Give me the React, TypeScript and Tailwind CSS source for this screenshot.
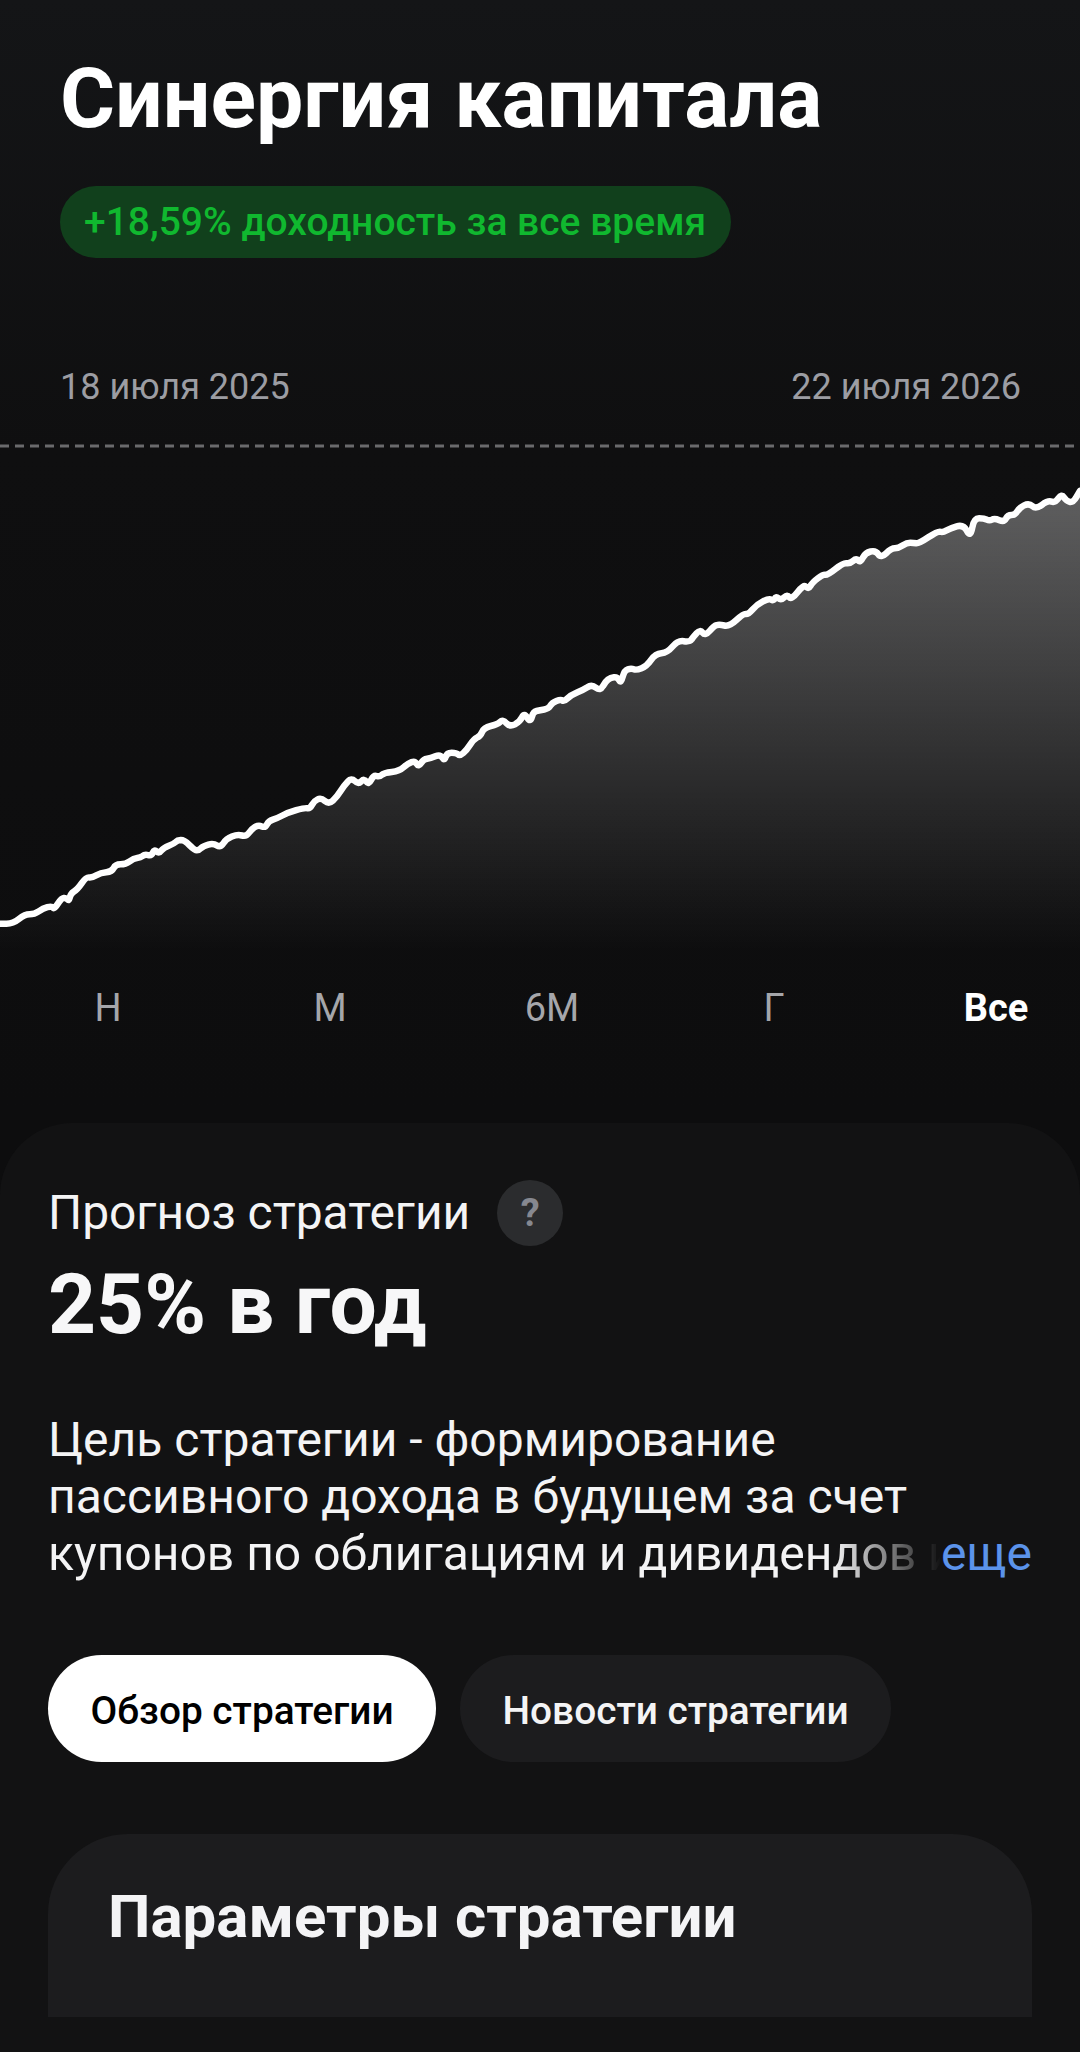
import React from 'react';

// Chart trace, measured off the screenshot: x in 0..3136 (left half + right half), y in 0..1560
const LEFT_TRACE = [
  [0, 1448], [38, 1448], [72, 1420], [100, 1420], [125, 1402], [150, 1395], [158, 1405], [178, 1372], [192, 1370], [200, 1380],
  [205, 1358], [225, 1345], [250, 1308], [268, 1310], [292, 1295], [325, 1292], [335, 1270], [365, 1270], [388, 1252], [408, 1250],
  [420, 1240], [440, 1245], [448, 1225], [462, 1238], [475, 1220], [505, 1208], [515, 1198], [535, 1197], [565, 1228], [578, 1228],
  [590, 1215], [620, 1207], [640, 1220], [657, 1193], [690, 1180], [715, 1187], [730, 1165], [750, 1152], [770, 1160], [780, 1140],
  [805, 1132], [835, 1115], [885, 1100], [900, 1103], [912, 1080], [932, 1070], [955, 1090], [978, 1068], [1000, 1032], [1020, 1010],
  [1040, 1030], [1058, 1012], [1070, 1032], [1085, 1002], [1102, 1008], [1115, 995], [1160, 990], [1185, 967], [1205, 960], [1215, 978],
  [1230, 955], [1250, 952], [1278, 940], [1290, 960], [1298, 935], [1325, 935], [1335, 945], [1355, 928], [1375, 895], [1395, 885],
  [1405, 860], [1445, 850], [1460, 835], [1480, 858], [1510, 842], [1522, 815], [1540, 845], [1548, 812],
];

const RIGHT_TRACE = [
  [0, 808], [25, 803], [35, 785], [60, 775], [70, 782], [90, 762], [125, 747], [150, 730], [175, 750], [190, 722],
  [205, 710], [225, 708], [235, 728], [245, 688], [265, 682], [280, 688], [310, 675], [335, 638], [370, 635], [400, 598],
  [435, 603], [445, 588], [465, 565], [480, 585], [505, 555], [520, 550], [550, 557], [590, 518], [605, 520], [630, 490],
  [665, 472], [678, 480], [685, 465], [700, 478], [718, 460], [730, 477], [765, 430], [780, 445], [790, 425], [822, 400],
  [835, 403], [880, 365], [900, 368], [918, 352], [930, 365], [945, 335], [975, 328], [990, 352], [1020, 322], [1040, 322],
  [1065, 305], [1085, 305], [1100, 308], [1155, 270], [1170, 275], [1190, 262], [1230, 250], [1250, 290], [1260, 232], [1290, 232],
  [1305, 240], [1320, 232], [1348, 243], [1358, 222], [1380, 222], [1392, 200], [1420, 186], [1440, 205], [1475, 178], [1495, 186],
  [1515, 158], [1528, 180], [1548, 185], [1568, 150],
];

const points = [...LEFT_TRACE, ...RIGHT_TRACE.map(([x, y]) => [x + 1568, y])].map(([x, y]) => [
  +((x * 1080) / 3136).toFixed(1),
  +(y / 3).toFixed(1),
]);

// rounds the corners: each point becomes a control point between two midpoints
const linePath = points
  .map(([x, y], i) => {
    if (i === 0) return `M${x} ${y}`;
    const [px, py] = points[i - 1];
    return `Q${px} ${py} ${((px + x) / 2).toFixed(1)} ${((py + y) / 2).toFixed(1)}`;
  })
  .join(' ') + ` L${points[points.length - 1].join(' ')}`;
const areaPath = `${linePath} L1080 540 L0 540 Z`;

const PERIODS = ['Н', 'М', '6М', 'Г', 'Все'];

const Chart = () => (
  <svg width="1080" height="540" viewBox="0 0 1080 540" className="block">
    <defs>
      <linearGradient id="area" gradientUnits="userSpaceOnUse" x1="0" y1="40" x2="0" y2="510">
        <stop offset="0" stopColor="#ffffff" stopOpacity="0.34" />
        <stop offset="1" stopColor="#ffffff" stopOpacity="0" />
      </linearGradient>
    </defs>
    <line x1="0" y1="5" x2="1080" y2="5" stroke="#6a6a6c" strokeWidth="3" strokeDasharray="9 6" />
    <path d={areaPath} fill="url(#area)" />
    <path d={linePath} fill="none" stroke="#ffffff" strokeWidth="6.5" strokeLinejoin="round" strokeLinecap="round" />
  </svg>
);

export default function App() {
  return (
    <div className="h-[2052px] w-[1080px] overflow-hidden bg-[linear-gradient(180deg,#141517_0%,#0f0f10_22%,#0d0d0e_54%)] font-['Roboto',sans-serif] text-white">
      <header className="px-[60px] pt-[50px]">
        <h1 className="text-[84.2px] leading-[98px] font-bold">Синергия капитала</h1>
        <div className="mt-[38px] inline-flex h-[72px] items-center rounded-full bg-[#11401c] pr-[25px] pl-[24px] text-[39px] font-medium text-[#10b82f]">
          +18,59% доходность за все время
        </div>
        <div className="mt-[109px] flex justify-between text-[36px] leading-[40px] text-[#9c9da3]">
          <span>18 июля 2025</span>
          <span className="translate-x-[1px]">22 июля 2026</span>
        </div>
      </header>

      <div className="mt-[34px]">
        <Chart />
      </div>

      <div className="mt-[7px] flex justify-between pr-[36px] pl-[60px] text-[38px] leading-[40px] text-[#a5a6aa]">
        {PERIODS.map((p) => (
          <span key={p} className={p === 'Все' ? 'w-24 text-center font-bold text-white' : 'w-24 text-center'}>
            {p}
          </span>
        ))}
      </div>

      <section className="mt-[95px] h-[960px] rounded-t-[72px] bg-[#121213] px-[48px] pt-[57px]">
        <div className="flex items-center gap-[27px]">
          <span className="text-[47.9px] leading-[66px] text-[#f4f4f5]">Прогноз стратегии</span>
          <span className="flex h-[66px] w-[66px] items-center justify-center rounded-full bg-[#2b2c2e] text-[38px] font-bold text-[#868890]">
            ?
          </span>
        </div>
        <div className="mt-[11px] text-[83.8px] leading-[94px] font-bold text-[#f7f7f8]">25% в год</div>

        <div className="mt-[60px] text-[48px] leading-[57px] text-[#f4f4f5]">
          <p>Цель стратегии - формирование</p>
          <p>пассивного дохода в будущем за счет</p>
          <p className="flex">
            <span className="min-w-0 flex-1 overflow-hidden whitespace-nowrap [mask-image:linear-gradient(90deg,#000_88%,transparent_100%)]">
              купонов по облигациям и дивидендов и
            </span>
            <span className="text-[#5b93ea]">еще</span>
          </p>
        </div>

        <div className="mt-[73px] flex gap-[24px]">
          <div className="flex h-[107px] items-center rounded-full bg-white px-[42.5px] pt-[5px] text-[38.8px] font-medium text-black">
            Обзор стратегии
          </div>
          <div className="flex h-[107px] items-center rounded-full bg-[#1c1c1e] px-[42.5px] pt-[5px] text-[38.8px] font-medium text-[#f4f4f5]">
            Новости стратегии
          </div>
        </div>

        <div className="mt-[72px] h-[183px] rounded-t-[80px] bg-[#1c1c1e] px-[60px] pt-[50px]">
          <h2 className="text-[60px] leading-[66px] font-bold text-[#f4f4f6]">Параметры стратегии</h2>
        </div>
      </section>
    </div>
  );
}
